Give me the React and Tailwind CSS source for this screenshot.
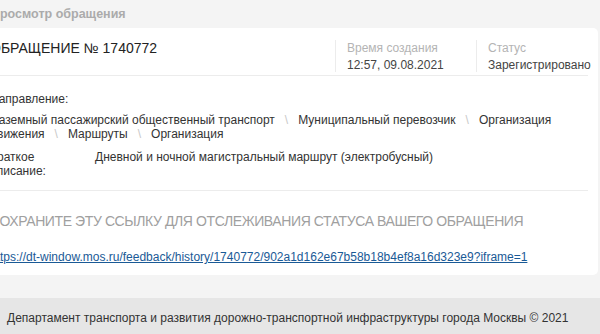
import React from 'react';

const Sep = () => <span className="text-[#c8c8c8] px-[10px]">\</span>;

const App = () => {
  const parts = [
    'Наземный пассажирский общественный транспорт',
    'Муниципальный перевозчик',
    'Организация движения',
    'Маршруты',
    'Организация',
  ];

  return (
    <div className="w-[600px] h-[334px] overflow-hidden bg-[#f4f4f4] text-[#333] text-[12px] font-['Liberation_Sans',Arial,sans-serif]">
      <div className="ml-[-20px] mr-[2px]">
        <div className="h-[28px] px-[11px] flex items-center">
          <h1 className="text-[12.5px] font-bold text-[#ababab]">Просмотр обращения</h1>
        </div>

        <div className="bg-white rounded-[5px] px-[10px]">
          <div className="h-[48px] pt-[12px] flex items-start border-b border-[#ececec]">
            <div className="flex-1 text-[14px] text-[#222] leading-[17px]">ОБРАЩЕНИЕ № 1740772</div>
            <div className="w-[141px] h-[32px] border-l border-[#ececec] pl-[11px] flex flex-col leading-[17px]">
              <span className="text-[#b4b4b4]">Время создания</span>
              <span className="text-[#444]">12:57, 09.08.2021</span>
            </div>
            <div className="w-[112px] h-[32px] border-l border-[#ececec] pl-[11px] flex flex-col leading-[17px]">
              <span className="text-[#b4b4b4]">Статус</span>
              <span className="text-[#444]">Зарегистрировано</span>
            </div>
          </div>

          <div className="pt-[16px] pb-[12px] border-b border-[#ececec] leading-[14px]">
            <div>Направление:</div>
            <div className="mt-[7px]">
              {parts.map((p, i) => (
                <React.Fragment key={p}>
                  {i > 0 && <Sep />}
                  <span>{p}</span>
                </React.Fragment>
              ))}
            </div>
            <div className="flex mt-[9px]">
              <div className="w-[105px]">Краткое<br />описание:</div>
              <div className="flex-1">Дневной и ночной магистральный маршрут (электробусный)</div>
            </div>
          </div>

          <div className="pt-[21px] pb-[11px]">
            <div className="text-[14px] tracking-[-0.4px] uppercase text-[#a0a0a0] leading-[18px]">Сохраните эту ссылку для отслеживания статуса вашего обращения</div>
            <a
              href="#"
              className="block mt-[20px] text-[#1a5a96] underline leading-[14px]"
            >
              https://dt-window.mos.ru/feedback/history/1740772/902a1d162e67b58b18b4ef8a16d323e9?iframe=1
            </a>
          </div>
        </div>
      </div>

      <footer className="mt-[23px] h-[40px] bg-[#e6e6e6] px-[7px] flex items-center">
        Департамент транспорта и развития дорожно-транспортной инфраструктуры города Москвы © 2021
      </footer>
    </div>
  );
};

export default App;
